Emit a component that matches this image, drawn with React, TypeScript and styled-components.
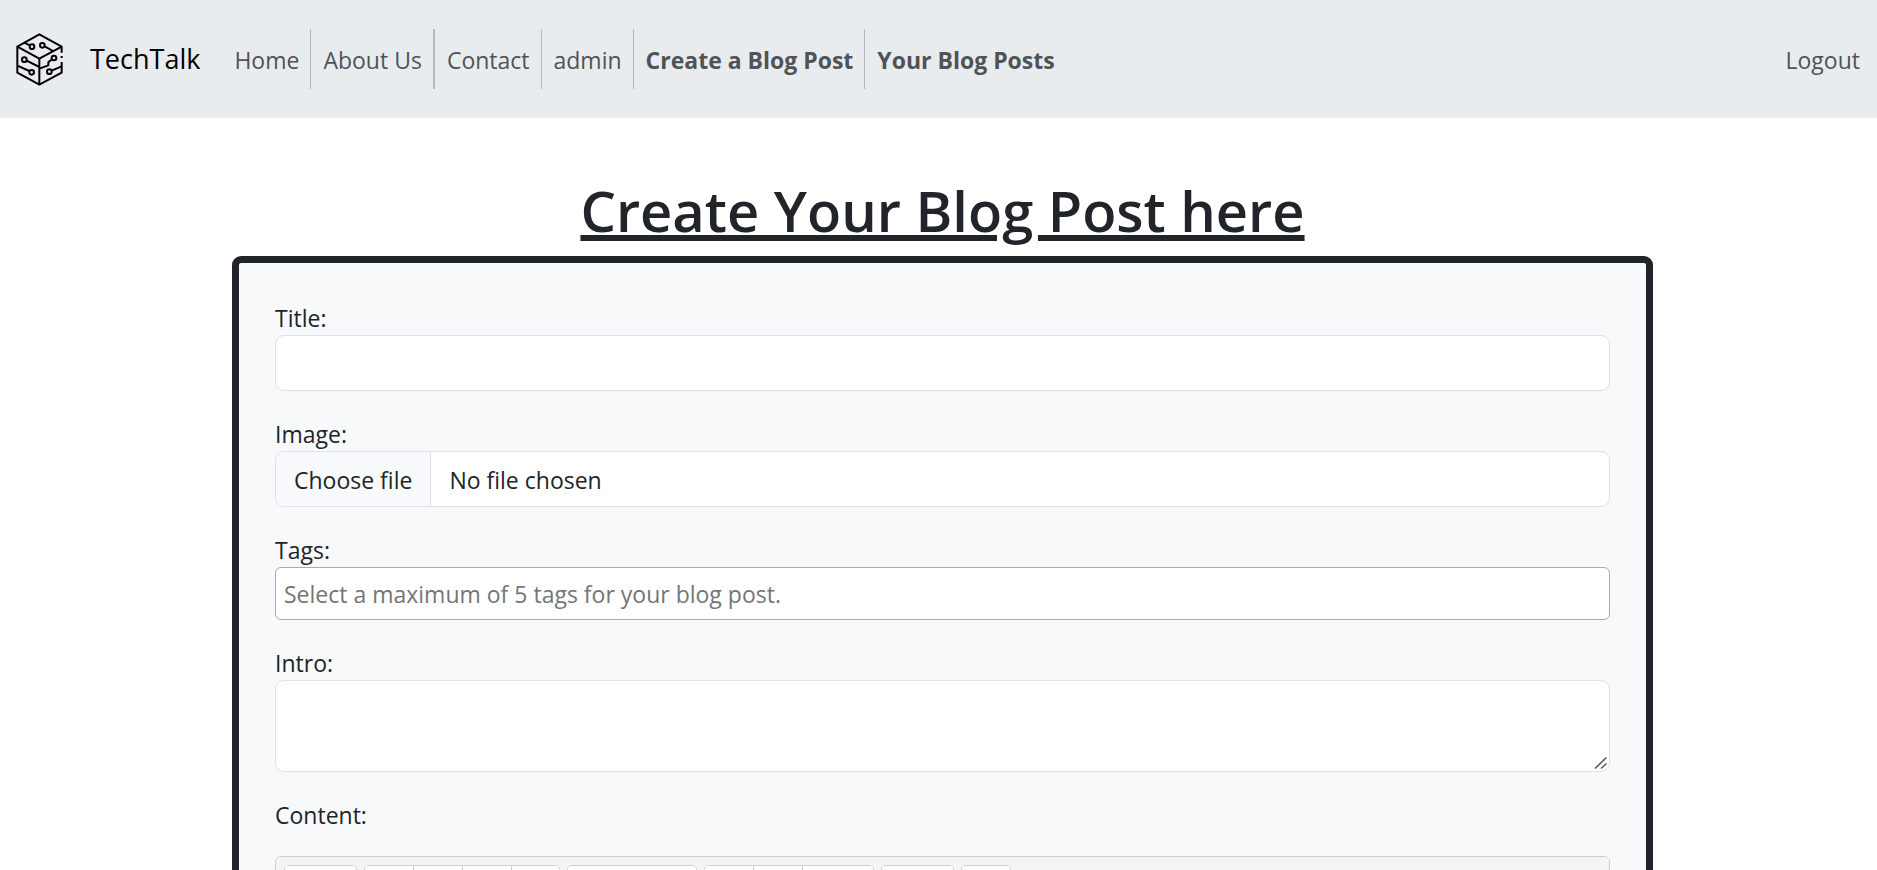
import React from "react";
import styled, { createGlobalStyle } from "styled-components";

const GlobalStyle = createGlobalStyle`
  *, *::before, *::after { box-sizing: border-box; }
  html { scrollbar-width: none; }
  body {
    margin: 0;
    background: #fff;
    color: #212529;
    font-family: "Segoe UI", "Open Sans", "Noto Sans", sans-serif;
    font-size: 23px;
    line-height: 36px;
  }
  button, input, textarea { font: inherit; color: inherit; }
`;

const Navbar = styled.nav`
  display: flex;
  align-items: center;
  height: 118px;
  padding: 0 17px 0 16px;
  background: #e8ecef;
`;

const Brand = styled.a`
  display: flex;
  align-items: center;
  gap: 27px;
  margin-right: 22px;
  color: #000;
  font-size: 27px;
  text-decoration: none;
`;

const NavList = styled.ul`
  display: flex;
  margin: 0;
  padding: 0;
  list-style: none;
`;

const NavItem = styled.li<{ $rule?: number }>`
  display: flex;
  align-items: center;
  height: 60px;
  padding: 0 11px 0 12px;
  border-right: ${({ $rule = 0 }) => $rule}px solid #b5b9bb;
`;

const NavLink = styled.a<{ $strong?: boolean }>`
  padding-top: 2px;
  color: #505356;
  font-weight: ${({ $strong }) => ($strong ? 700 : 400)};
  text-decoration: none;
  white-space: nowrap;
`;

const LogoutLink = styled(NavLink)`
  margin-left: auto;
`;

const Main = styled.main`
  padding: 56px 224px 48px 232px;
`;

const Heading = styled.h1`
  margin: 0 0 10px;
  font-size: 56px;
  font-weight: 600;
  line-height: 72px;
  text-align: center;
  text-decoration: underline;
  text-decoration-thickness: 6px;
  text-underline-offset: 3px;
`;

const Form = styled.form`
  display: flex;
  flex-direction: column;
  gap: 24px;
  padding: 36px;
  border: 7px solid #212529;
  border-radius: 9px;
  background: #f8f9fb;
`;

const Field = styled.div`
  display: flex;
  flex-direction: column;
`;

const Label = styled.label`
  align-self: flex-start;
  height: 36px;
  line-height: 38px;
`;

const TextInput = styled.input`
  width: 100%;
  height: 56px;
  padding: 0 18px;
  border: 1px solid #dee2e6;
  border-radius: 9px;
  background: #fff;
`;

const TagsInput = styled(TextInput)`
  height: 53px;
  padding: 0 8px;
  border-color: #aaa;
  border-radius: 6px;

  &::placeholder { color: #757575; opacity: 1; }
`;

const TextAreaBox = styled.div`
  position: relative;
`;

const TextArea = styled.textarea`
  display: block;
  width: 100%;
  height: 92px;
  padding: 9px 18px;
  border: 1px solid #dee2e6;
  border-radius: 9px;
  background: #fff;
  resize: vertical;

  &::-webkit-resizer { background: transparent; }
`;

const ResizeGrip = styled.svg`
  position: absolute;
  right: 2px;
  bottom: 2px;
  pointer-events: none;
`;

const FilePicker = styled.label`
  position: relative;
  display: flex;
  height: 56px;
  overflow: hidden;
  border: 1px solid #dee2e6;
  border-radius: 9px;
  background: #fff;
`;

const FileInput = styled.input`
  position: absolute;
  inset: 0;
  opacity: 0;
`;

const FileName = styled.span`
  padding: 10px 18px 8px;
`;

const FileAction = styled(FileName)`
  border-right: 1px solid #dee2e6;
  background: #f8f9fa;
`;

const Editor = styled.div`
  overflow: hidden;
  border: 1px solid #ccc;
  border-radius: 6px;
  background: #fff;
`;

const Toolbar = styled.div`
  display: flex;
  gap: 7px;
  padding: 8px;
  border-bottom: 1px solid #ccc;
  background: #f4f4f4;
`;

const ButtonGroup = styled.div`
  display: flex;
  overflow: hidden;
  border: 1px solid #ccc;
  border-radius: 5px;
`;

const ToolButton = styled.button<{ $width: number }>`
  width: ${({ $width }) => $width}px;
  height: 43px;
  padding: 0;
  border: 0;
  background: #fff;

  & + & { border-left: 1px solid #ccc; }
`;

const EditorArea = styled.textarea`
  display: block;
  width: 100%;
  height: 480px;
  padding: 15px;
  border: 0;
  resize: none;
`;

const navItems = [
  { label: "Home", rule: 1 },
  { label: "About Us", rule: 2 },
  { label: "Contact", rule: 1 },
  { label: "admin", rule: 1 },
  { label: "Create a Blog Post", rule: 1, strong: true },
  { label: "Your Blog Posts", rule: 0, strong: true },
];

const toolGroups = [
  [{ name: "Style", width: 71 }],
  [
    { name: "Bold", width: 48 },
    { name: "Underline", width: 49 },
    { name: "Remove font style", width: 49 },
    { name: "Strikethrough", width: 48 },
  ],
  [{ name: "Font family", width: 128 }],
  [
    { name: "Unordered list", width: 48 },
    { name: "Ordered list", width: 49 },
    { name: "Paragraph", width: 71 },
  ],
  [{ name: "Table", width: 71 }],
  [{ name: "Link", width: 48 }],
];

const Logo = () => (
  <svg width="47" height="53" viewBox="48 40 141 159" fill="none" stroke="#000" strokeWidth="6" strokeLinejoin="round" aria-hidden="true">
    <path d="M185 99V81L118 44L52 81V159L118 195L185 159V127M185 109V115" />
    <path d="M52 81L118 117L185 81M118 117V195" />
    <path d="M72 69L90 77M134 80L159 94M80 123L118 142M52 138L88 154M118 147L145 137V128L156 119M155 153L185 140" />
    <circle cx="96" cy="81" r="7" />
    <circle cx="127" cy="77" r="7" />
    <circle cx="73" cy="120" r="7" />
    <circle cx="162" cy="115" r="7" />
    <circle cx="95" cy="158" r="7" />
    <circle cx="148" cy="156" r="7" />
  </svg>
);

export default function App() {
  return (
    <>
      <GlobalStyle />
      <Navbar>
        <Brand href="#">
          <Logo />
          TechTalk
        </Brand>
        <NavList>
          {navItems.map(({ label, rule, strong }) => (
            <NavItem key={label} $rule={rule}>
              <NavLink href="#" $strong={strong}>{label}</NavLink>
            </NavItem>
          ))}
        </NavList>
        <LogoutLink href="#">Logout</LogoutLink>
      </Navbar>
      <Main>
        <Heading>Create Your Blog Post here</Heading>
        <Form>
          <Field>
            <Label htmlFor="title">Title:</Label>
            <TextInput id="title" type="text" />
          </Field>
          <Field>
            <Label htmlFor="image">Image:</Label>
            <FilePicker>
              <FileAction>Choose file</FileAction>
              <FileName>No file chosen</FileName>
              <FileInput id="image" type="file" />
            </FilePicker>
          </Field>
          <Field>
            <Label htmlFor="tags">Tags:</Label>
            <TagsInput id="tags" type="text" placeholder="Select a maximum of 5 tags for your blog post." />
          </Field>
          <Field>
            <Label htmlFor="intro">Intro:</Label>
            <TextAreaBox>
              <TextArea id="intro" />
              <ResizeGrip width="14" height="14" viewBox="0 0 14 14" stroke="#555" strokeWidth="1.5" aria-hidden="true">
                <path d="M1 12.5L12.5 1.5M7 12.5L12.5 7.5" />
              </ResizeGrip>
            </TextAreaBox>
          </Field>
          <Label htmlFor="content">Content:</Label>
          <Editor>
            <Toolbar>
              {toolGroups.map((group) => (
                <ButtonGroup key={group[0].name}>
                  {group.map(({ name, width }) => (
                    <ToolButton key={name} type="button" aria-label={name} $width={width} />
                  ))}
                </ButtonGroup>
              ))}
            </Toolbar>
            <EditorArea id="content" />
          </Editor>
        </Form>
      </Main>
    </>
  );
}
